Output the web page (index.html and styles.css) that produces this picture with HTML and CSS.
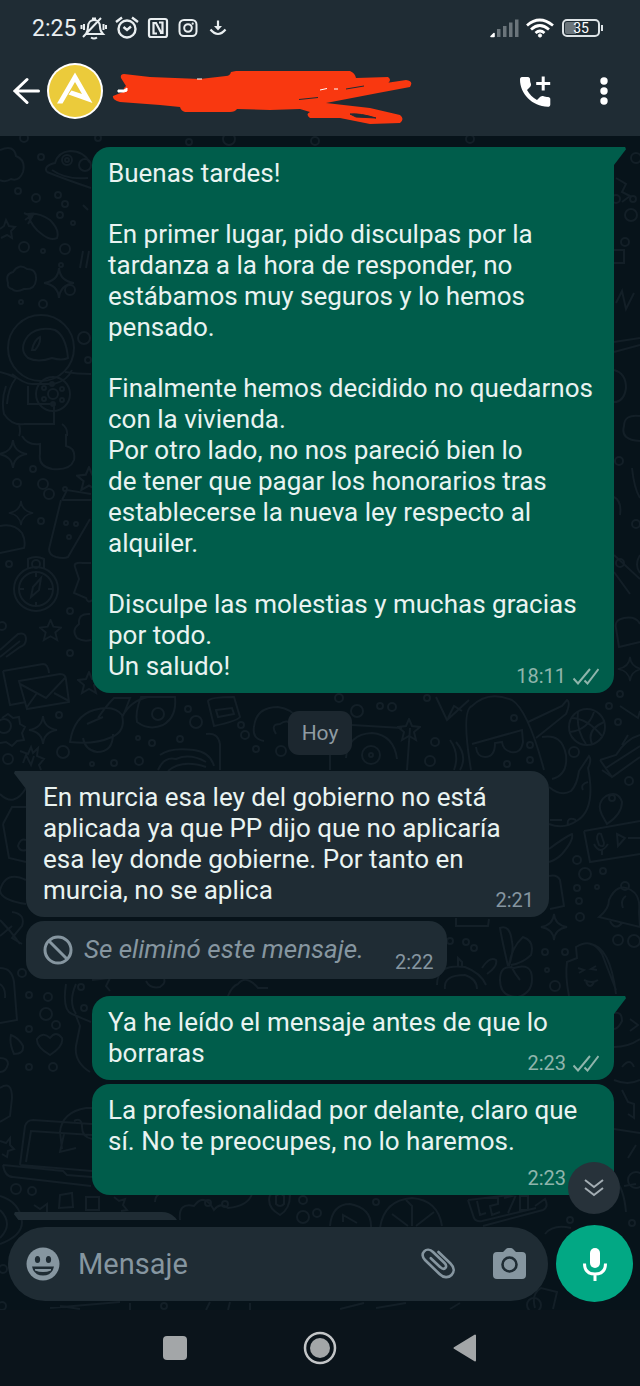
FILE: index.html
```html
<!DOCTYPE html>
<html lang="es">
<head>
<meta charset="utf-8">
<meta name="viewport" content="width=device-width, initial-scale=1">
<title>Chat</title>
<link rel="stylesheet" href="styles.css">
</head>
<body>
<svg class="defs" width="0" height="0" aria-hidden="true">
  <symbol id="ticks" viewBox="0 0 26 17"><path d="M.5 10.500l4.500 5L17 1M11.500 12.500l3 3L25.500 1" fill="none" stroke="currentColor" stroke-width="2"/></symbol>
  <symbol id="star" viewBox="-12 -12 24 24"><path d="M0-11l3 7 8 1-6 5 2 8-7-4-7 4 2-8-6-5 8-1z"/></symbol>
  <symbol id="spark" viewBox="-15 -15 30 30"><path d="M0-14Q1-2 14 0Q1 2 0 14Q-1 2-14 0Q-1-2 0-14z"/></symbol>
</svg>

<header class="top">
  <div class="status">
    <time class="clock">2:25</time>
    <svg class="st-bell" viewBox="80 16 28 24" fill="none" stroke="#e9eef0" stroke-width="2"><path d="M86 34h17c-2-2-3-4-3-7 0-5-3-7-6-7s-6 2-6 7c0 3-1 5-2 7M92 18.500h4M91 37.500q3 2 6 0M83 37l18-19M84 24v6M81.500 25v4M103.500 24v6M106 25v4"/></svg>
    <svg class="st-alarm" viewBox="115 16 24 24" fill="none" stroke="#e9eef0" stroke-width="2.400"><circle cx="127" cy="29" r="8.500"/><path d="M123.500 27l3.500 3 4-3.500M116 22l6-4.500M138 22l-6-4.500"/></svg>
    <svg class="st-nfc" viewBox="147 17 22 22" fill="none" stroke="#e9eef0" stroke-width="2.200"><rect x="149" y="19" width="18" height="18" rx="2"/><path d="M157 33.500h-3.500V23h2.500l5 9.500M159 22.500h3.500V33h-2.500"/></svg>
    <svg class="st-insta" viewBox="178 18 20 20" fill="none" stroke="#e9eef0" stroke-width="2"><rect x="179.500" y="20" width="17" height="16" rx="4.500"/><circle cx="188" cy="28" r="3.800"/><circle cx="192.700" cy="23.700" r=".5" stroke-width="1.200"/></svg>
    <svg class="st-down" viewBox="209 19 18 18" fill="none" stroke="#e9eef0" stroke-width="2.200"><path d="M218 20.500v7"/><path d="M214 26h8l-4 4.500z" fill="#e9eef0" stroke="none"/><path d="M210.500 29.500q7.500 9 15 0"/></svg>
    <span class="spring"></span>
    <svg class="st-signal" viewBox="490 18 29 20"><path d="M491 36.500l3-3v3z" fill="#fff" stroke="#fff" stroke-width="1.600" stroke-linejoin="round"/><path d="M497 29h3.500v8h-3.500zM503 26h3.500v11h-3.500zM509 22.500h3.500v14.500h-3.500zM515 19.500h3.500v17.500h-3.500z" fill="#6b757b"/></svg>
    <svg class="st-wifi" viewBox="526 17 28 22" fill="none" stroke="#fff" stroke-width="2.800"><path d="M527 25.500q12.500-11 26 0M531 29.500q8.700-8 18 0M535.500 33q4.500-4 9 0"/><circle cx="540" cy="35.500" r="1.600" fill="#fff" stroke-width="1"/></svg>
    <span class="battery"><span class="battery-level">35</span></span>
  </div>
  <div class="toolbar">
    <button class="icon-btn back" aria-label="Atrás"><svg viewBox="13 77 27 28" fill="none" stroke="#fff" stroke-width="3" stroke-linecap="round"><path d="M38.500 91H15M27 79.500L15 91l12 11.500"/></svg></button>
    <svg class="avatar" viewBox="0 0 56 56" role="img" aria-label="Foto de perfil"><circle cx="28" cy="28" r="28" fill="#fff"/><circle cx="28" cy="28" r="26" fill="#ebcb3b"/><path d="M28 9.500L45.500 40 21.500 31.500l3-4 10.500 3.500L28 19 15.500 40.500H10z" fill="#fff"/></svg>
    <svg class="scribble" viewBox="112 56 300 70" aria-hidden="true">
      <path d="M124 74L150 77L175 78L200 79L226 76Q230 76 231 72L236 71H350Q355 73 356 78L388 77Q392 80 388 83L366 86L406 80Q414 81 410 87L378 93L326 103L370 108L400 115Q405 119 400 123L370 124L350 120L340 118L310 118Q305 114 310 112L300 109L270 110L237 109Q235 112 230 112H185Q181 111 180 107L160 105L120 102Q112 100 113 96L123 92L124 88L126 86L121 78Q120 74 124 74z" fill="#f93810"/>
      <path d="M350 114q10-1 26 4l-20-1zM299 99.500l19-2M364 86l-18 3" fill="#1f2c34" stroke="#1f2c34"/>
      <path d="M118 90h6l3-2v3l-3 1h-6zM320 90l7-1.500M334 89h4M197 79h5" fill="#fff" stroke="#fff"/>
    </svg>
    <span class="spring"></span>
    <button class="icon-btn call" aria-label="Llamar"><svg viewBox="520 75 31 31" fill="#fff"><path d="M522 76h6c1 0 2 1 2 2 0 2 .5 4 1 5 0 1 0 2-1 3l-3 3c2.500 4.500 5.500 7.500 10 10l3-3c1-1 2-1 3-1 2 .7 3.500 1 5 1s2.300 1 2.300 2v5.500c0 1.500-1 2.300-2.500 2.300C532 105 520 93 520 78.500c0-1.500.7-2.500 2-2.500z"/><path d="M541.700 75.500h3v5.500h5.500v3h-5.500v5.500h-3v-5.500h-5.500v-3h5.500z"/></svg></button>
    <button class="icon-btn more" aria-label="Más opciones"><svg viewBox="0 0 8 28" fill="#fff"><circle cx="4" cy="4" r="3.700"/><circle cx="4" cy="14" r="3.700"/><circle cx="4" cy="24" r="3.700"/></svg></button>
  </div>
</header>

<main class="chat">
  <svg class="wallpaper" viewBox="0 136 640 1174" preserveAspectRatio="xMidYMin slice" aria-hidden="true">
    <g>
      <!-- left edge, upper half -->
      <path d="M0 150q14-6 16 6q10 4 7 16q-4 10-12 7q-6 4-11 1M47 172q-4-6 8-9q3-11 15-12q14 0 20 12M47 172q20 8 44 16M52 170q14 10 36 8"/>
      <circle cx="67" cy="160" r="5"/><circle cx="67" cy="160" r="2"/><circle cx="85" cy="165" r="6"/>
      <path d="M28 214q10-2 22 6q10 10 7 18q-6 3-14-3q-12-8-15-21zM24 213l9 4M25 220l8-6M28 224l6-11M0 229l4-3 2-6 3 6 6 1-4 4 1 7-5-3-6 3"/>
      <path d="M8 283q-3-9 5-11q6-9 14-3q10 0 9 11q-1 10-12 9q-8 4-12 0q-5-1-4-6zM83 205l5 5M80 268l3-17M86 268l3-17"/>
      <circle cx="41" cy="348" r="33"/><path d="M28 336q10-10 27-6q11 6 13 28q-6 3-16 0q-14 5-24 0q-10-9 0-22zM32 350q2-10 8-13q1 6-5 13zM12 374q12 10 20 10h22q14-4 18-14M0 372q9 2 16 6M65 372q12 2 26 2M6 386q-5 14-2 28q8 12 20 10M16 378q-8 10-9 26M28 386v18h26v20h-30M19 424q2 8 0 12M62 424q6 4 5 12"/>
      <circle cx="53" cy="394" r="17"/><circle cx="53" cy="394" r="5"/><circle cx="44" cy="388" r="2"/><circle cx="52" cy="384" r="2"/><circle cx="62" cy="389" r="2"/><circle cx="62" cy="400" r="2"/><circle cx="53" cy="404" r="2"/><circle cx="44" cy="399" r="2"/>
      <path d="M22 436q6 10 18 8v10q-2 12 12 15q18 2 22-9q2-12-8-14v-12M62 500h29M61 500l-12 49q0 6 7 8q8 2 12 0l22-38M62 500l5-10 24 4M0 526q14-3 22 7q4 8 2 15l-24 5"/>
      <circle cx="66" cy="523" r="2"/><circle cx="76" cy="524" r="2"/><circle cx="69" cy="537" r="2"/>
      <circle cx="36" cy="589" r="22"/><circle cx="36" cy="589" r="17"/><path d="M28 569v-10q8-4 16 0v10M31 597l2-10 8-9-2 12zM36 573v4M36 602v4M20 589h4M48 589h4M75 567q-2-5 8-4h8M75 567l4 12-5 14 12 5q2 6 6 2M90 614q-12-1-11 10q-8 6-2 14q6 4 14 2"/><circle cx="36" cy="564" r="4"/>
      <path d="M0 650l18-16q8-2 8 5q0 6-6 8l-14 10M0 657l20-16M3 671l40-7q5 0 6 9M3 671l7 34 16-3M19 681l41-7q6 0 6 6l3 22-42 7zM20 684l26 14 19-20M27 707l10-14M69 701l-15-8"/>
      <!-- between the outgoing bubble and the date -->
      <path d="M70 742q4-26 24-32q20-6 28 5q4 16-10 22q-18 8-42 5zM83 738q2 12 14 14q16 0 16-18M98 718q8-12 16-20h16l-7 18M87 724l16-7M122 717q8-16 26-20M137 722q-2-10 4-25h34q2 20-12 28q-14 6-26-3z"/><circle cx="158" cy="714" r="6"/>
      <path d="M208 701q2-4 26-4l6 20q-3 4-26 9zM216 710l16-2 2 6-16 3zM254 727q2-20 24-20q14 2 20 12M254 727q-2 12 10 14M276 734q-6-10 4-10 8-6 12 2M206 734q12-2 14 10v26M158 770q6-14 18-11q14-6 30 3M168 771q14-12 38-4M160 755q10-8 34-5q16 2 20 16M2 718l6-4 5 4 6-1 1 7 5 3-3 6 2 7-7 1-5 5-6-4-6 1"/><circle cx="4" cy="726" r="7"/>
      <path d="M20 751l8 3 3-7 2 6 5-5-1 8 7 3-5 6 2 5M23 763l3-8 5 10 3-9"/>
      <path d="M436 697l11 23 22-20M448 718l6-12 8 5"/><path d="M471 770q-10-60 1-64q16-16 40-6q16 10 32 70M472 744l50-14 1 12q-2 12-12 10q-8-2-9-10l-7 1q0 14-10 14q-8 0-9-10M528 722l34-16 5-6q4 2-1 14l-30 24M542 737q20-4 24 18q2 20-14 24"/>
      <circle cx="371" cy="755" r="9"/><circle cx="371" cy="755" r="2"/><path d="M346 758q2-24 26-25q22 2 25 26M352 725l50 3M410 728l-3 42M450 740q10 14 4 30M456 742q12 14 4 28M330 740v30"/>
      <circle cx="587" cy="727" r="18"/><path d="M571 718q16 0 31 18M578 712q-2 18 8 32M570 732q18-2 24-20M592 744q-6-14 12-22M600 760l16-5q10-16 24-20M600 760l12 17 28-20M606 768l34-22M622 745l6-10M620 706l18 12 2-7M602 770l10 7"/>
      <!-- right side, beside incoming messages -->
      <path d="M549 787q12 10 22 4q6-6 8-20l10-15q3 4-1 12q8 40-10 52q-14 10-29 4M588 782q-8 2-5 8M568 826q-2-10 8-6M550 820h12M602 815q-6-12 4-19q12-6 16 6q0 12-15 22zM584 831l56-10M584 831l6 31 50-8M597 839q0-7 4-5l3 9q0 5-5 2zM594 844q6 12 14 0M602 849v6M617 834l8 4-7 8zM628 838h12"/><circle cx="612" cy="798" r="3"/>
      <path d="M549 849q16-12 23-15q2 6-10 20q-6 6-13 8M549 876q8-2 11 4l4 26-14 3"/>
      <path d="M599 917q10-8 10-17q8-18 22-10q10 6 8 22l1 15zM610 921q5 10 12 2M626 896q-6 4-3 12"/><circle cx="625" cy="886" r="4"/>
      <path d="M569 996q-4-20-2-34l10-4-1-11q16-10 26 7l14 36M590 944q20 2 26 50M578 968l6 2-5 3M596 966l-5 3 6 1M584 980q8 4 14 0M586 982q4 8 8 0"/>
      <path d="M437 985q0-22 28-18q16 6 21 18M445 989q-2-14 20-14q12 4 12 14M458 966v-8l4 4v6M482 968q8-12 14-8q2 6-9 14M508 966q-6-26-8-38q10-4 12 14q2 8-3 24q2-18 14-29q12 4 8 18q-8 8-20 10M500 980q0-16 14-12q18-6 18 11q0 14-14 18q-18 0-18-17M511 966q4 8 9 14M456 918v8h32l1-7"/>
      <path d="M614 1013q8-2 8 8q-4 8-8 8M630 1019l8 6-8 6M614 1047q14 0 26-8M614 1080q14 6 26 0M622 1067q8-10 12 0M622 1090l6 12 6 2v14l-6-4M614 1129l26 4M628 1158l8-13"/>
      <path d="M614 250h10v13h-10M616 303l6-12 4 18 8-16M614 352l26-7M614 342l26-4M614 370q12 3 12 18q-2 14-12 14M640 416q-16-2-16 10q-4 14 16 15M632 468q2 20 8 30M614 497q8 4 6 18M614 555l26 24M640 555q-6 10 0 18M614 572l16 22M616 178l10 6-4 8 8 4-8 6"/>
      <!-- left side, below -->
      <path d="M3 824l9-17h14M3 824l6 34 17 4M26 788q-12 20-26 6M26 840q-6-2-8 6q2 6 8 4M26 880q-20-10-26 10q0 10 26 14M12 912q14 2 10 14l-10 12 10 6M0 920q10 10 20 24M0 936l12-10M0 968q12 0 14 14l3 38-17 3M0 984q6 4 5 14"/>
      <path d="M66 984q-4 26 6 30q14 6 19 8M76 984q-8 18 0 30M76 1016l4 10-4 20q-2 16 14 26M92 980l18-2-4 8 4 5M50 1055q-14-8-13-16q6-8 13-1q6-8 12 0q2 8-12 17zM11 1035q-2 8 3 19q10 0 9-8q-4-8-12-11zM0 1058q8 0 8 6q-2 8-8 8M146 981q4 8 14 6 6-4 4-8M228 996q4-10 10-12q8-10 20 4h10"/>
      <path d="M20 1165l5-39q2-6 8-6l59 4M26 1162l5-31 61 4M20 1165l72 6M3 1165q2 12 10 12l78 9M3 1165l60 6 4 4 25 2M62 1149l-2-17q2-20 26-24h6M64 1134l-4 18 16-4M74 1121q8-4 8 6q0 10 10 12M0 1088q12-8 12 10l-2 18-10 6M0 1141l6 2 4-5 0 7 4 4-6 2-1 6-5-3"/>
      <path d="M60 1195l12-2 1 14-14 1zM86 1197h13v13h-13zM34 1205l6 4 7-5v9M114 1197l5 4 6-2-2 6 4 5-6 1M155 1202q0-10 14-10M180 1220q-2-18 14-14q10-14 20 4 6-8 14-2q20-2 24-14M270 1195q10-6 20 0q0 14-10 20q-14-8-10-20M276 1196q4-4 8 0v8q-4 4-8 0zM0 1196q20 6 22 26q0 14-22 22M0 1210q14 14 0 28M50 1308l70-6M60 1306l20 3"/>
      <path d="M330 1226q2-22 20-22q22 4 21 24M343 1222v-7l14 8M380 1228q4-28 32-30q26 2 30 28M412 1226v-20l-6-6M408 1226l-16-12M416 1226l18-14M468 1200l6 18q2 4 8 3l54-13M468 1200l66-8q6 4 10-2M477 1201l3 14 6-2M490 1198h8v6l-8 2 2 9 8-3M504 1198l12-3-8 18M520 1196h8v14h-8zM535 1206l10-7q4 8-2 11l-60 16M545 1234q8-10 26-6M614 1178q10 10 12 34M624 1186l12-2"/>
      <path d="M340 1309l24-6M376 1308l30-5M535 1308q-4-14 6-20l16 4-4 17M460 1303l-10 6M210 1302l-4 8M230 1302l-2 8M250 1303v7M130 1303v7"/><circle cx="534" cy="1305" r="7"/>
    </g>
    <g>
      <circle cx="24" cy="138" r="4"/><circle cx="98" cy="138" r="3"/><circle cx="189" cy="142" r="3"/><circle cx="229" cy="139" r="6"/><circle cx="315" cy="141" r="4"/><circle cx="470" cy="139" r="4"/><circle cx="41" cy="157" r="3"/><circle cx="18" cy="191" r="3"/><circle cx="36" cy="198" r="4"/><circle cx="58" cy="195" r="3"/><circle cx="65" cy="204" r="3"/><circle cx="60" cy="215" r="3"/><circle cx="73" cy="223" r="2"/><circle cx="24" cy="247" r="5"/><circle cx="43" cy="251" r="2"/><circle cx="65" cy="249" r="5"/><circle cx="61" cy="265" r="2"/><circle cx="70" cy="290" r="5"/><circle cx="21" cy="302" r="2"/><circle cx="43" cy="304" r="4"/><circle cx="84" cy="338" r="6"/><circle cx="88" cy="360" r="3"/>
      <circle cx="33" cy="469" r="3"/><circle cx="17" cy="483" r="4"/><circle cx="43" cy="484" r="5"/><circle cx="49" cy="494" r="5"/><circle cx="65" cy="489" r="2"/><circle cx="41" cy="521" r="3"/><circle cx="9" cy="564" r="3"/><circle cx="70" cy="611" r="3"/><circle cx="70" cy="653" r="3"/><circle cx="2" cy="626" r="4"/><circle cx="59" cy="715" r="3"/><circle cx="63" cy="752" r="6"/><circle cx="8" cy="759" r="5"/><circle cx="92" cy="764" r="2"/><circle cx="114" cy="763" r="3"/><circle cx="139" cy="761" r="4"/><circle cx="138" cy="738" r="2"/><circle cx="152" cy="743" r="3"/><circle cx="180" cy="739" r="3"/><circle cx="188" cy="709" r="3"/><circle cx="196" cy="722" r="6"/><circle cx="241" cy="725" r="3"/><circle cx="245" cy="735" r="4"/><circle cx="256" cy="749" r="3"/><circle cx="281" cy="751" r="5"/>
      <circle cx="339" cy="698" r="4"/><circle cx="357" cy="711" r="6"/><circle cx="380" cy="706" r="3"/><circle cx="392" cy="707" r="4"/><circle cx="427" cy="698" r="3"/><circle cx="435" cy="742" r="4"/><circle cx="430" cy="761" r="5"/><circle cx="514" cy="718" r="3"/><circle cx="530" cy="745" r="3"/><circle cx="530" cy="760" r="3"/><circle cx="507" cy="764" r="3"/><circle cx="574" cy="752" r="5"/><circle cx="618" cy="722" r="3"/><circle cx="609" cy="706" r="3"/><circle cx="620" cy="694" r="3"/><circle cx="629" cy="781" r="4"/><circle cx="585" cy="874" r="6"/><circle cx="577" cy="860" r="4"/><circle cx="603" cy="871" r="3"/><circle cx="577" cy="888" r="3"/><circle cx="579" cy="901" r="3"/><circle cx="580" cy="917" r="4"/><circle cx="597" cy="887" r="2"/><circle cx="618" cy="940" r="5"/><circle cx="634" cy="941" r="6"/><circle cx="545" cy="952" r="3"/><circle cx="565" cy="952" r="3"/><circle cx="555" cy="986" r="5"/><circle cx="547" cy="970" r="2"/><circle cx="450" cy="941" r="3"/><circle cx="466" cy="942" r="3"/><circle cx="474" cy="948" r="3"/>
      <circle cx="22" cy="973" r="4"/><circle cx="29" cy="995" r="3"/><circle cx="48" cy="997" r="4"/><circle cx="46" cy="1014" r="6"/><circle cx="56" cy="1025" r="4"/><circle cx="29" cy="1029" r="3"/><circle cx="81" cy="987" r="3"/><circle cx="29" cy="1067" r="3"/><circle cx="53" cy="1067" r="4"/><circle cx="84" cy="1008" r="3"/><circle cx="16" cy="1189" r="5"/><circle cx="32" cy="1191" r="4"/><circle cx="208" cy="1203" r="3"/><circle cx="225" cy="1204" r="3"/><circle cx="303" cy="1200" r="4"/><circle cx="303" cy="1217" r="6"/><circle cx="317" cy="1213" r="4"/><circle cx="376" cy="1202" r="3"/><circle cx="3" cy="1269" r="4"/><circle cx="2" cy="1306" r="4"/><circle cx="164" cy="1306" r="3"/><circle cx="570" cy="1220" r="3"/><circle cx="632" cy="1223" r="3"/><circle cx="616" cy="199" r="4"/><circle cx="633" cy="199" r="3"/><circle cx="631" cy="215" r="6"/><circle cx="625" cy="242" r="4"/><circle cx="636" cy="158" r="5"/><circle cx="619" cy="461" r="4"/><circle cx="636" cy="524" r="4"/><circle cx="620" cy="563" r="4"/><circle cx="636" cy="1180" r="8"/>
    </g>
    <use href="#spark" x="43" y="267" width="32" height="32"/><use href="#spark" x="-2" y="439" width="30" height="30"/><use href="#spark" x="8" y="500" width="26" height="26"/><use href="#star" x="39" y="619" width="23" height="23"/><use href="#spark" x="28" y="715" width="30" height="30"/><use href="#star" x="397" y="718" width="24" height="24"/><use href="#star" x="76" y="466" width="26" height="26"/><use href="#star" x="77" y="671" width="24" height="24"/><use href="#spark" x="540" y="913" width="28" height="28"/><use href="#spark" x="617" y="656" width="26" height="26"/><path d="M616 628q-2-8 8-10q12-2 16 6M616 628l3 19 21-5"/>
  </svg>

  <section class="messages" aria-label="Mensajes">
    <article class="bubble out tail">
      <p>Buenas tardes!</p>
      <p>En primer lugar, pido disculpas por la tardanza a la hora de responder, no estábamos muy seguros y lo hemos pensado.</p>
      <p>Finalmente hemos decidido no quedarnos con la vivienda.<br>Por otro lado, no nos pareció bien lo<br>de tener que pagar los honorarios tras establecerse la nueva ley respecto al alquiler.</p>
      <p>Disculpe las molestias y muchas gracias por todo.<br>Un saludo!</p>
      <span class="meta"><time>18:11</time><svg class="ticks"><use href="#ticks"/></svg></span>
    </article>
    <div class="date">Hoy</div>
    <article class="bubble in tail">
      <p>En murcia esa ley del gobierno no está aplicada ya que PP dijo que no aplicaría esa ley donde gobierne. Por tanto en murcia, no se aplica</p>
      <span class="meta"><time>2:21</time></span>
    </article>
    <article class="bubble in deleted">
      <svg class="ban" viewBox="0 0 30 30" fill="none" stroke="#8696a0" stroke-width="3"><circle cx="15" cy="15" r="13"/><path d="M6 6l18 18"/></svg>
      <p>Se eliminó este mensaje.</p>
      <span class="meta"><time>2:22</time></span>
    </article>
    <article class="bubble out tail new-turn">
      <p>Ya he leído el mensaje antes de que lo<br>borraras</p>
      <span class="meta"><time>2:23</time><svg class="ticks"><use href="#ticks"/></svg></span>
    </article>
    <article class="bubble out meta-row">
      <p>La profesionalidad por delante, claro que sí. No te preocupes, no lo haremos.</p>
      <span class="meta"><time>2:23</time><svg class="ticks"><use href="#ticks"/></svg></span>
    </article>
    <article class="bubble in tail new-turn next" aria-hidden="true"></article>
  </section>

  <form class="composer">
    <div class="field">
      <button type="button" class="icon-btn emoji" aria-label="Emojis"><svg viewBox="0 0 34 34"><circle cx="17" cy="17" r="16.500" fill="#8696a0"/><g fill="#1f2c34"><ellipse cx="11.500" cy="12.500" rx="2.600" ry="3.500"/><ellipse cx="22.500" cy="12.500" rx="2.600" ry="3.500"/><path d="M6 19.500h22q-2 9-11 9t-11-9z"/></g><path d="M9 22h16v1.500q-8 3-16 0z" fill="#8696a0"/></svg></button>
      <input class="text" type="text" placeholder="Mensaje" aria-label="Mensaje">
      <button type="button" class="icon-btn clip" aria-label="Adjuntar"><svg viewBox="421 1248 34 32" fill="none" stroke="#8696a0" stroke-width="2.600" stroke-linecap="round"><path d="M438.500 1252l12 11.500c4 4 4 8.500 1 11.500s-8 3-12-1l-14.500-14c-3-3-3-6.500-.8-8.700s5.800-2.200 8.800.7l11.500 11c2 2 2 3.800.8 5s-3 1.200-5-.8l-9.500-9"/></svg></button>
      <button type="button" class="icon-btn camera" aria-label="Cámara"><svg viewBox="493 1247 33 32"><path d="M503 1251l3-3q1-1 2-1h3q1 0 2 1l3 3h6q4 0 4 4v19q0 4-4 4h-25q-4 0-4-4v-19q0-4 4-4z" fill="#8696a0"/><circle cx="509.500" cy="1263.500" r="7" fill="#8696a0" stroke="#1f2c34" stroke-width="2.600"/></svg></button>
    </div>
    <button type="button" class="mic" aria-label="Grabar mensaje de voz"><svg viewBox="0 0 24 34" fill="none" stroke="#fff"><path d="M12 6v10" stroke-width="10" stroke-linecap="round"/><path d="M1.500 16.500q0 10.500 10.500 10.500t10.500-10.500M12 27v7" stroke-width="3"/></svg></button>
    <button type="button" class="jump" aria-label="Ir al final"><svg viewBox="0 0 20 20" fill="none" stroke="#a3adb3" stroke-width="2"><path d="M1 2l9 7 9-7M1 10l9 7 9-7"/></svg></button>
  </form>
</main>

<nav class="sysnav" aria-label="Sistema">
  <button class="icon-btn" aria-label="Recientes"><svg viewBox="0 0 34 34"><rect x="5" y="5" width="24" height="24" rx="4" fill="#a3a6a8"/></svg></button>
  <button class="icon-btn" aria-label="Inicio"><svg viewBox="0 0 34 34"><circle cx="17" cy="17" r="15" fill="none" stroke="#c3c5c7" stroke-width="2.500"/><circle cx="17" cy="17" r="10" fill="#a3a6a8"/></svg></button>
  <button class="icon-btn" aria-label="Volver"><svg viewBox="0 0 34 34"><path d="M6.500 17L27 4.500v25z" fill="#a3a6a8" stroke="#a3a6a8" stroke-width="2" stroke-linejoin="round"/></svg></button>
</nav>
</body>
</html>
```
FILE: styles.css
```css
* { box-sizing: border-box; }

body {
  margin: 0;
  height: 100vh;
  display: flex;
  flex-direction: column;
  overflow: hidden;
  background: #0b141b;
  color: #e9f3f1;
  font-family: Roboto, "Noto Sans", sans-serif;
  font-size: 26px;
  line-height: 31px;
}

p { margin: 0; }
svg { display: block; flex: none; }
.defs { position: absolute; }
.spring { flex: 1; }

.icon-btn {
  padding: 0;
  border: 0;
  background: none;
  flex: none;
}

/* Header */
.top { background: #1f2c34; padding-bottom: 10px; }

.status {
  height: 56px;
  display: flex;
  align-items: center;
  padding: 0 40px 0 32px;
}
.clock { font-size: 23px; color: #e9eef0; margin-right: 4px; }
.st-bell { width: 28px; height: 24px; margin-right: 7px; }
.st-alarm { width: 24px; height: 24px; margin-right: 8px; }
.st-nfc { width: 22px; height: 22px; margin-right: 9px; }
.st-insta { width: 20px; height: 20px; margin-right: 11px; }
.st-down { width: 18px; height: 18px; }
.st-signal { width: 29px; height: 20px; margin-right: 7px; }
.st-wifi { width: 28px; height: 22px; margin-right: 8px; }
.battery {
  position: relative;
  width: 38px;
  height: 18px;
  border: 2px solid #dde3e6;
  border-radius: 5px;
  background: linear-gradient(90deg, #6b757b 0 35%, transparent 35%) content-box;
  padding: 1px;
}
.battery::after {
  content: "";
  position: absolute;
  right: -5px;
  top: 4px;
  width: 2px;
  height: 6px;
  background: #dde3e6;
}
.battery-level {
  display: block;
  text-align: center;
  font-size: 14px;
  line-height: 12px;
  color: #fff;
}

.toolbar {
  height: 70px;
  display: flex;
  align-items: center;
  padding: 0 32px 0 13px;
}
.back svg { width: 27px; height: 28px; }
.avatar { width: 56px; height: 56px; margin: 0 9px 0 7px; }
.scribble { width: 300px; height: 70px; }
.call { margin-right: 49px; }
.call svg { width: 31px; height: 31px; }
.more svg { width: 8px; height: 28px; }

/* Conversation */
.chat {
  position: relative;
  flex: 1;
  min-height: 0;
  display: flex;
  flex-direction: column;
  background: #07131a;
}
.wallpaper {
  position: absolute;
  inset: 0;
  width: 100%;
  height: 100%;
  fill: none;
  stroke: #131f27;
  stroke-width: 2;
}

.messages {
  position: relative;
  flex: 1;
  min-height: 0;
  overflow: hidden;
  display: flex;
  flex-direction: column;
  align-items: flex-start;
  gap: 4px;
  padding: 11px 26px 0;
}

.bubble {
  position: relative;
  flex: none;
  padding: 11px 16px;
  border-radius: 18px;
}
.bubble p + p { margin-top: 30px; }
.out { align-self: stretch; margin-left: 66px; background: #005d4b; }
.in { margin-right: 65px; padding-left: 17px; background: #1f2c34; }
.new-turn { margin-top: 13px; }
.meta-row { padding-bottom: 38px; }

.tail::before {
  content: "";
  position: absolute;
  top: 0;
  width: 30px;
  height: 18px;
  background: inherit;
}
.out.tail::before { right: -12px; clip-path: polygon(0 0, 97% 0, 100% 12%, 60% 100%, 0 100%); }
.in.tail::before { left: -12px; clip-path: polygon(100% 0, 3% 0, 0 12%, 40% 100%, 100% 100%); }

.meta {
  position: absolute;
  right: 15px;
  bottom: 5px;
  display: flex;
  align-items: center;
  gap: 7px;
  font-size: 20px;
  line-height: 24px;
  color: #8fb5ac;
}
.in .meta { color: #8696a0; }
.ticks { width: 26px; height: 17px; }

.date {
  align-self: center;
  margin: 14px 0 12px;
  padding: 7px 14px 6px;
  border-radius: 11px;
  background: #1c272f;
  color: #8f9ba2;
  font-size: 21px;
}

.deleted {
  display: flex;
  align-items: center;
  gap: 11px;
  padding: 13px 14px 14px 17px;
  color: #8696a0;
  font-style: italic;
}
.deleted .ban { width: 30px; height: 30px; }
.deleted .meta {
  position: static;
  align-self: flex-end;
  margin: 0 0 -9px 20px;
  font-style: normal;
}
.next { width: 154px; height: 60px; }

/* Message box */
.composer {
  position: relative;
  display: flex;
  align-items: center;
  gap: 8px;
  padding: 5px 7px 8px 8px;
}
.field {
  flex: 1;
  min-width: 0;
  height: 74px;
  display: flex;
  align-items: center;
  padding: 0 22px 0 18px;
  border-radius: 37px;
  background: #1f2c34;
}
.emoji svg { width: 34px; height: 34px; }
.text {
  flex: 1;
  min-width: 0;
  margin: 0 18px;
  padding: 2px 0 0;
  border: 0;
  outline: 0;
  background: none;
  color: #e9edef;
  font: inherit;
  font-size: 29px;
}
.text::placeholder { color: #8696a0; opacity: 1; }
.clip { margin-right: 38px; }
.clip svg { width: 34px; height: 32px; }
.camera svg { width: 33px; height: 32px; }
.mic {
  flex: none;
  width: 77px;
  height: 77px;
  display: grid;
  place-items: center;
  padding: 0;
  border: 0;
  border-radius: 50%;
  background: #02a884;
}
.mic svg { width: 24px; height: 34px; }
.jump {
  position: absolute;
  right: 20px;
  bottom: 96px;
  width: 52px;
  height: 52px;
  display: grid;
  place-items: center;
  padding: 0;
  border: 0;
  border-radius: 50%;
  background: #27323a;
}
.jump svg { width: 20px; height: 20px; }

/* System navigation */
.sysnav {
  height: 76px;
  display: flex;
  align-items: center;
  justify-content: center;
  gap: 111px;
}
.sysnav svg { width: 34px; height: 34px; }
```
